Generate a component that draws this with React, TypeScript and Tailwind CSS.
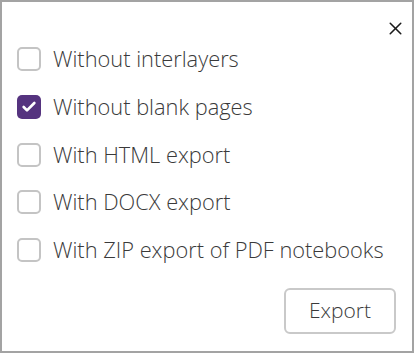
import { Check, X } from 'lucide-react';

const options = [
  { label: 'Without interlayers', checked: false },
  { label: 'Without blank pages', checked: true },
  { label: 'With HTML export', checked: false },
  { label: 'With DOCX export', checked: false },
  { label: 'With ZIP export of PDF notebooks', checked: false },
];

export default function App() {
  return (
    <div
      className="w-[414px] h-[353px] bg-white border-2 border-[#a3a3a3] text-[#3a3a3a] flex flex-col"
      style={{ fontFamily: '"Open Sans", "Noto Sans", sans-serif' }}
    >
      <div className="flex justify-end pt-[15px] pr-[6px]">
        <button className="w-[22px] h-[22px] flex items-center justify-center text-[#1a1a1a]">
          <X className="w-[21px] h-[21px]" strokeWidth={1.8} />
        </button>
      </div>

      <div className="flex flex-col gap-[23.75px] pl-[15px] mt-[8px]">
        {options.map((o) => (
          <label key={o.label} className="flex items-center gap-[12px] h-[24px]">
            {o.checked ? (
              <span className="w-[24px] h-[24px] rounded-[5px] bg-[#55337f] flex items-center justify-center">
                <Check className="w-[16px] h-[16px] text-white" strokeWidth={4} />
              </span>
            ) : (
              <span className="w-[24px] h-[24px] rounded-[5px] border-2 border-[#c4c4c4] bg-white" />
            )}
            <span className="text-[21.8px] leading-none font-light">{o.label}</span>
          </label>
        ))}
      </div>

      <div className="flex justify-end mt-auto pr-[16px] pb-[17px]">
        <button className="w-[112px] h-[46px] rounded-[6px] border-2 border-[#c9c9c9] bg-white text-[21px] font-light text-[#3a3a3a]">
          Export
        </button>
      </div>
    </div>
  );
}
